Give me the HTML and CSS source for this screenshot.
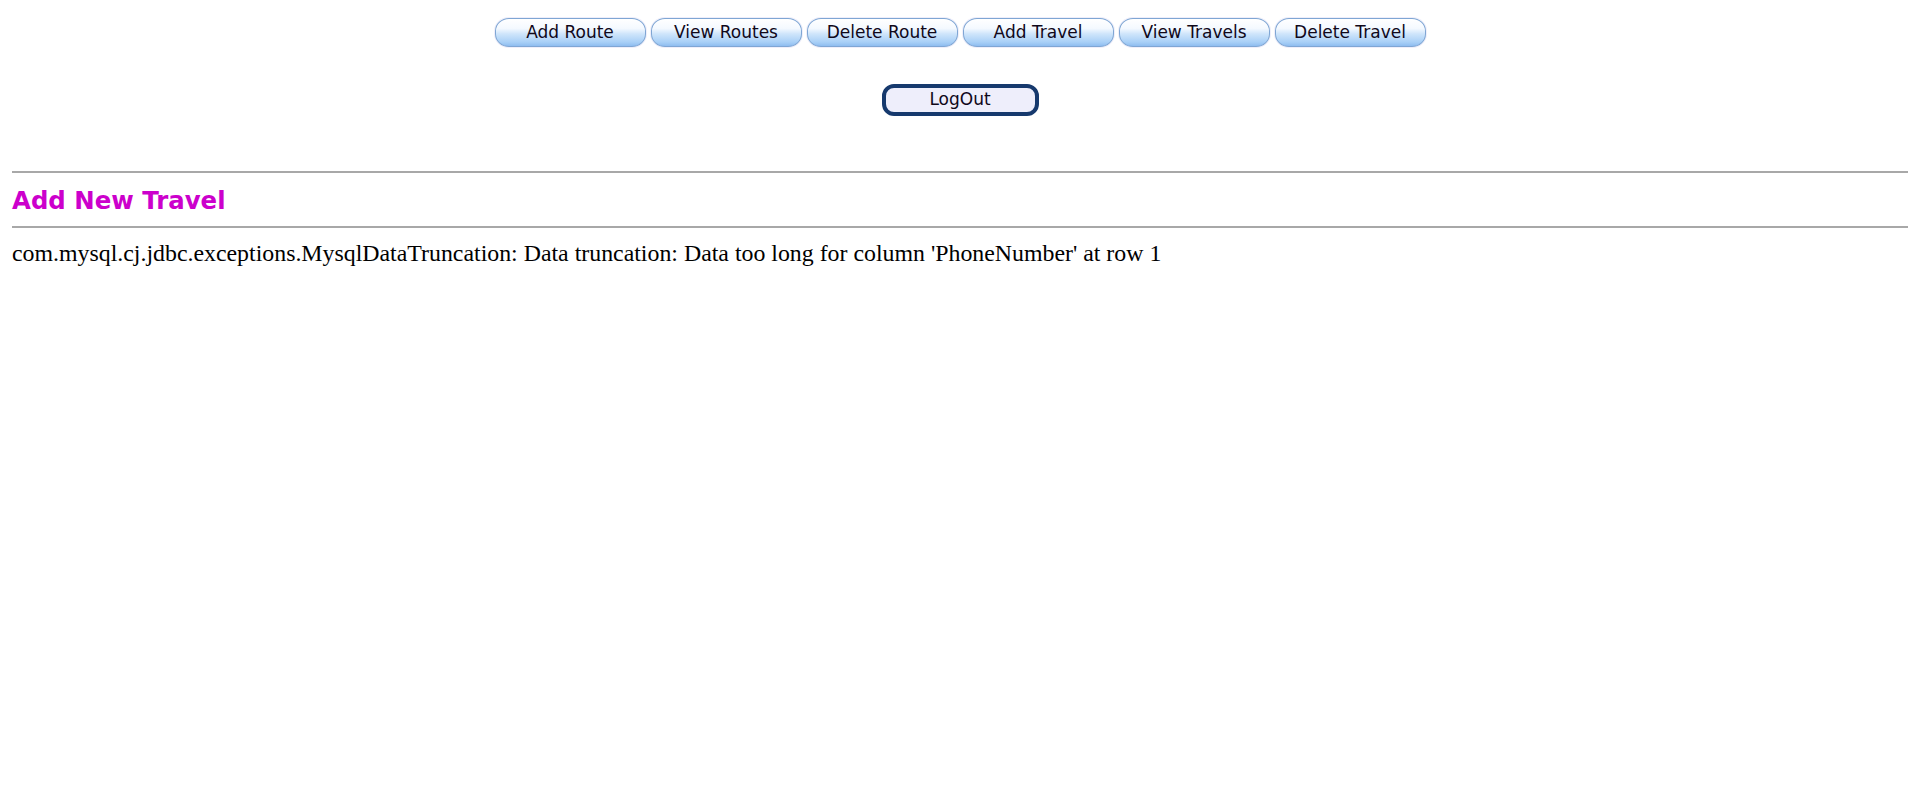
FILE: index.html
```html
<!DOCTYPE html>
<html>
<head>
<meta charset="utf-8">
<title>Add New Travel</title>
<link rel="stylesheet" href="styles.css">
</head>
<body>
<div class="nav">
  <button class="navbtn">Add Route</button>
  <button class="navbtn">View Routes</button>
  <button class="navbtn">Delete Route</button>
  <button class="navbtn">Add Travel</button>
  <button class="navbtn">View Travels</button>
  <button class="navbtn">Delete Travel</button>
</div>
<div class="logout-row">
  <button class="logout">LogOut</button>
</div>
<hr class="rule rule-top">
<h3 class="title">Add New Travel</h3>
<hr class="rule">
<p class="msg">com.mysql.cj.jdbc.exceptions.MysqlDataTruncation: Data truncation: Data too long for column 'PhoneNumber' at row 1</p>
</body>
</html>
```

FILE: styles.css
```css
html, body {
  margin: 0;
  padding: 0;
  background: #ffffff;
}
body {
  padding: 0 12px;
}
.nav {
  display: flex;
  justify-content: center;
  gap: 5px;
  padding-top: 18px;
}
.navbtn {
  box-sizing: border-box;
  width: 151px;
  height: 29px;
  margin: 0;
  padding: 0 0 2px 0;
  border: 1px solid #7fa6d4;
  border-radius: 14px / 13px;
  background: linear-gradient(to bottom, #ffffff 0%, #f4f9ff 35%, #cfe5fb 55%, #a9d0f7 85%, #8fbdf0 100%);
  box-shadow: 0 0 0 1px #eeeefa;
  font-family: "DejaVu Sans", Verdana, sans-serif;
  font-size: 17px;
  color: #10081a;
  cursor: pointer;
}
.logout-row {
  display: flex;
  justify-content: center;
  padding-top: 37px;
}
.logout {
  box-sizing: border-box;
  width: 157px;
  height: 32px;
  margin: 0;
  padding: 0 0 2px 0;
  border: 4px solid #16396d;
  border-radius: 12px / 12px;
  background: #eeeefb;
  font-family: "DejaVu Sans", Verdana, sans-serif;
  font-size: 17px;
  color: #10081a;
  cursor: pointer;
}
.rule {
  border: 0;
  border-top: 2px solid #a8a8a8;
  margin: 0;
}
.rule-top {
  margin-top: 55px;
}
.title {
  margin: 0;
  padding: 14px 0 11px;
  font-family: "DejaVu Sans", Verdana, sans-serif;
  font-weight: bold;
  font-size: 24.4px;
  line-height: 28px;
  color: #cc00cc;
}
.msg {
  margin: 0;
  padding-top: 11px;
  font-family: "Liberation Serif", "Times New Roman", serif;
  font-size: 23.85px;
  line-height: 28px;
  color: #000000;
}
```
